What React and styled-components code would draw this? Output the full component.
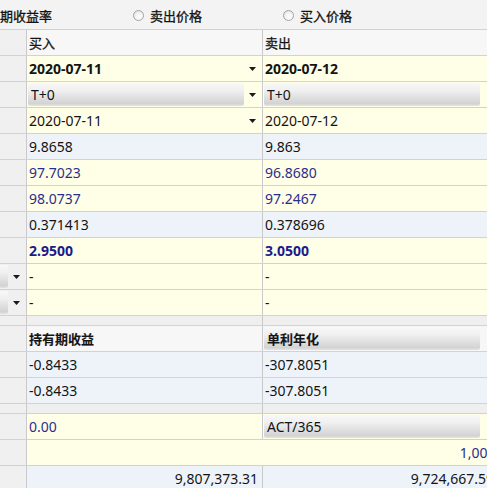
import React from "react";
import styled, { createGlobalStyle, css } from "styled-components";

const GlobalStyle = createGlobalStyle`
  html, body { margin: 0; padding: 0; background: #ffffff; overflow: hidden; }
  body { font-family: "Noto Sans", "Noto Sans CJK SC", sans-serif; }
  * { box-sizing: border-box; }
`;

const LINE = "#d2d2d2";
const VLINE = "#c9c9c9";
const BG = {
  head: "#f3f3f3",
  sub: "#f7f7f7",
  yellow: "#ffffe8",
  blue: "#eef3fa",
  side: "#f0f0f0",
};

const Sheet = styled.div`
  width: 548px;
  display: flex;
  flex-direction: column;
`;

const HeaderBar = styled.div`
  height: 30px;
  background: ${BG.head};
  border-bottom: 1px solid ${LINE};
  display: flex;
  align-items: center;
  overflow: hidden;
`;

const RadioGroup = styled.div`
  display: flex;
  align-items: center;
  gap: 81px;
  margin-left: -30px;
  margin-top: 1px;
`;

const RadioItem = styled.label`
  display: flex;
  align-items: center;
  gap: 6px;
  font-family: "Noto Sans CJK SC", sans-serif;
  font-size: 13px;
  color: #111;
  white-space: nowrap;
  -webkit-text-stroke: 0.3px #111;
`;

const RadioDot = styled.span`
  width: 11px;
  height: 11px;
  border-radius: 50%;
  border: 1px solid #a4a4a4;
  background: radial-gradient(circle at 60% 65%, #ffffff 0%, #f4f4f4 45%, #d8d8d8 100%);
`;

const Row = styled.div`
  display: grid;
  grid-template-columns: 27px 236px 236px 49px;
  height: ${(p) => (p.$gap ? 10 : 26)}px;
  border-bottom: 1px solid ${LINE};
  background: ${(p) => (p.$gap ? "#efefef" : "transparent")};
`;

const Cell = styled.div`
  grid-column: span ${(p) => p.$span || 1};
  background: ${(p) => BG[p.$bg] || "transparent"};
  border-right: 1px solid ${VLINE};
  display: flex;
  align-items: center;
  justify-content: ${(p) => (p.$right ? "flex-end" : "flex-start")};
  padding: ${(p) => (p.$right ? "0 4px 0 2px" : "0 0 0 2px")};
  min-width: 0;
  overflow: hidden;
  white-space: nowrap;
`;

const SideCell = styled(Cell)`
  background: ${BG.side};
  padding: 0;
`;

const tones = {
  black: "#141414",
  blue: "#2d2d8c",
  strong: "#1b1b8a",
};

const Value = styled.span`
  font-size: 14px;
  line-height: 1;
  color: ${(p) => tones[p.$tone || "black"]};
  font-weight: ${(p) => (p.$bold ? 700 : 400)};
  ${(p) =>
    p.$cjk &&
    css`
      font-family: "Noto Sans CJK SC", sans-serif;
      font-size: 13px;
      -webkit-text-stroke: ${p.$bold ? "0.1px" : "0.3px"} currentColor;
    `}
`;

const Combo = styled.div`
  flex: 1;
  align-self: stretch;
  margin: 1px 0 1px -1px;
  padding-left: 3px;
  display: flex;
  align-items: center;
  border-radius: 2px;
  background: linear-gradient(
    to bottom,
    #f8f8f8 0%,
    #efefef 35%,
    #e2e2e2 60%,
    #d3d3d3 90%,
    #e4e4e4 100%
  );
`;

const ArrowBox = styled.span`
  width: 18px;
  flex: none;
  display: flex;
  justify-content: flex-start;
  align-items: center;
  padding-left: 5px;
  margin-left: auto;
`;

const Arrow = () => (
  <ArrowBox>
    <svg width="7" height="4" viewBox="0 0 7 4">
      <path d="M0 0H7L3.5 4Z" fill="#1a1a1a" />
    </svg>
  </ArrowBox>
);

const DateCell = ({ bg, bold, arrow = true, children }) => (
  <Cell $bg={bg}>
    <Value $bold={bold}>{children}</Value>
    {arrow ? <Arrow /> : <ArrowBox />}
  </Cell>
);

const ComboCell = ({ bg, children, bold, cjk, arrow = true }) => (
  <Cell $bg={bg}>
    <Combo>
      <Value $bold={bold} $cjk={cjk}>
        {children}
      </Value>
    </Combo>
    {arrow ? <Arrow /> : <ArrowBox />}
  </Cell>
);

const SideCombo = () => (
  <SideCell>
    <Combo />
    <Arrow />
  </SideCell>
);

const ValueCell = ({ bg, tone, bold, right, children }) => (
  <Cell $bg={bg} $right={right}>
    <Value $tone={tone} $bold={bold}>
      {children}
    </Value>
  </Cell>
);

const Filler = styled.div``;

const pairs = [
  { bg: "blue", a: "9.8658", b: "9.863" },
  { bg: "yellow", a: "97.7023", b: "96.8680", tone: "blue" },
  { bg: "yellow", a: "98.0737", b: "97.2467", tone: "blue" },
  { bg: "blue", a: "0.371413", b: "0.378696" },
  { bg: "yellow", a: "2.9500", b: "3.0500", tone: "strong", bold: true },
];

export default function App() {
  return (
    <>
      <GlobalStyle />
      <Sheet>
        <HeaderBar>
          <RadioGroup>
            <RadioItem>
              <RadioDot />
              到期收益率
            </RadioItem>
            <RadioItem>
              <RadioDot />
              卖出价格
            </RadioItem>
            <RadioItem>
              <RadioDot />
              买入价格
            </RadioItem>
          </RadioGroup>
        </HeaderBar>

        <Row>
          <SideCell />
          <Cell $bg="sub">
            <Value $cjk>买入</Value>
          </Cell>
          <Cell $bg="sub">
            <Value $cjk>卖出</Value>
          </Cell>
          <Filler />
        </Row>

        <Row>
          <SideCell />
          <DateCell bg="yellow" bold>
            2020-07-11
          </DateCell>
          <DateCell bg="yellow" bold arrow={false}>
            2020-07-12
          </DateCell>
          <Filler />
        </Row>

        <Row>
          <SideCell />
          <ComboCell bg="yellow">T+0</ComboCell>
          <ComboCell bg="yellow" arrow={false}>
            T+0
          </ComboCell>
          <Filler />
        </Row>

        <Row>
          <SideCell />
          <DateCell bg="yellow">2020-07-11</DateCell>
          <DateCell bg="yellow" arrow={false}>
            2020-07-12
          </DateCell>
          <Filler />
        </Row>

        {pairs.map((r) => (
          <Row key={r.a}>
            <SideCell />
            <ValueCell bg={r.bg} tone={r.tone} bold={r.bold}>
              {r.a}
            </ValueCell>
            <ValueCell bg={r.bg} tone={r.tone} bold={r.bold}>
              {r.b}
            </ValueCell>
            <Filler />
          </Row>
        ))}

        {[0, 1].map((i) => (
          <Row key={"dash" + i}>
            <SideCombo />
            <ValueCell bg="yellow">-</ValueCell>
            <ValueCell bg="yellow">-</ValueCell>
            <Filler />
          </Row>
        ))}

        <Row $gap>
          <SideCell />
          <Cell />
          <Cell />
          <Filler />
        </Row>

        <Row>
          <SideCell />
          <Cell $bg="sub">
            <Value $cjk $bold>
              持有期收益
            </Value>
          </Cell>
          <ComboCell bg="sub" cjk bold arrow={false}>
            单利年化
          </ComboCell>
          <Filler />
        </Row>

        {[0, 1].map((i) => (
          <Row key={"ret" + i}>
            <SideCell />
            <ValueCell bg="blue">-0.8433</ValueCell>
            <ValueCell bg="blue">-307.8051</ValueCell>
            <Filler />
          </Row>
        ))}

        <Row $gap>
          <SideCell />
          <Cell />
          <Cell />
          <Filler />
        </Row>

        <Row>
          <SideCell />
          <ValueCell bg="yellow" tone="blue">
            0.00
          </ValueCell>
          <ComboCell bg="yellow" arrow={false}>
            ACT/365
          </ComboCell>
          <Filler />
        </Row>

        <Row>
          <SideCell />
          <Cell $bg="yellow" $span={3} $right>
            <Value $tone="blue">1,000,000.00</Value>
          </Cell>
        </Row>

        <Row>
          <SideCell />
          <ValueCell bg="blue" right>
            9,807,373.31
          </ValueCell>
          <ValueCell bg="blue" right>
            9,724,667.59
          </ValueCell>
          <Filler />
        </Row>
      </Sheet>
    </>
  );
}
